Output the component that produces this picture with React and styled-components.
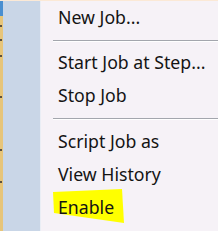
import React from "react";
import styled, { createGlobalStyle } from "styled-components";

const Global = createGlobalStyle`
  html, body { margin: 0; padding: 0; background: #f6f2f7; }
  body { font-family: "Noto Sans", "Open Sans", sans-serif; }
`;

const Screen = styled.div`
  width: 218px;
  height: 231px;
  display: flex;
  flex-direction: column;
  overflow: hidden;
`;

const TopStrip = styled.div`
  height: 1px;
  background: #fbe9d6;
  flex: none;
`;

const Frame = styled.div`
  flex: 1;
  display: flex;
`;

const TreeEdge = styled.div`
  width: 3px;
  flex: none;
  background:
    linear-gradient(#4a8fd0, #4a8fd0) 0 0 / 3px 15px no-repeat,
    linear-gradient(#e7c57a, #e7c57a);
  position: relative;
`;

const Tick = styled.span`
  position: absolute;
  left: 0;
  width: 2px;
  height: 2px;
  background: #5a5040;
  top: ${(p) => p.$y}px;
`;

const Menu = styled.div`
  flex: 1;
  display: flex;
`;

const Gutter = styled.div`
  width: 37px;
  flex: none;
  background: #c9d6e7;
  border-right: 1px solid #eaeef5;
`;

const Items = styled.div`
  flex: 1;
  display: flex;
  flex-direction: column;
  background: #f6f2f7;
`;

const Item = styled.div`
  position: relative;
  height: 33px;
  line-height: 33px;
  padding-left: 17px;
  font-size: 17.7px;
  color: #141414;
  white-space: nowrap;
`;

const Label = styled.span`
  position: relative;
  z-index: 1;
`;

const Separator = styled.div`
  height: ${(p) => p.$h}px;
  display: flex;
  align-items: center;
  padding-left: 12px;
  &::after {
    content: "";
    display: block;
    flex: 1;
    height: 1px;
    background: #a3a6ad;
    box-shadow: 0 1px 0 #ffffff;
  }
`;

const Highlight = styled.svg`
  position: absolute;
  left: 11px;
  top: -3px;
  width: 74px;
  height: 36px;
  z-index: 0;
`;

export default function App() {
  return (
    <Screen>
      <Global />
      <TopStrip />
      <Frame>
        <TreeEdge>
          <Tick $y={24} />
          <Tick $y={38} />
          <Tick $y={54} />
          <Tick $y={95} />
          <Tick $y={148} />
          <Tick $y={180} />
        </TreeEdge>
        <Menu>
          <Gutter />
          <Items>
            <Item><Label>New Job...</Label></Item>
            <Separator $h={12} />
            <Item><Label>Start Job at Step...</Label></Item>
            <Item><Label>Stop Job</Label></Item>
            <Separator $h={13} />
            <Item><Label>Script Job as</Label></Item>
            <Item><Label>View History</Label></Item>
            <Item>
              <Highlight viewBox="0 0 74 36" aria-hidden="true">
                <polygon points="1,4 70,1 72,35 2,25" fill="#ffff00" />
              </Highlight>
              <Label>Enable</Label>
            </Item>
          </Items>
        </Menu>
      </Frame>
    </Screen>
  );
}
